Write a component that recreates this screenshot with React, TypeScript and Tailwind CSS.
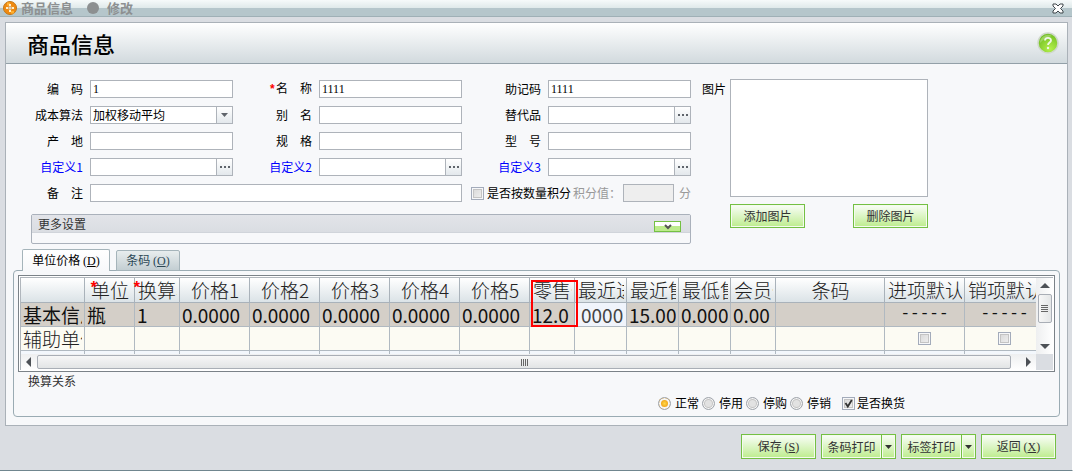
import React, { useState } from 'react';

const MONO = "font-['Liberation_Mono','Noto_Sans_CJK_SC',monospace]";

const greenButton =
  'border border-[#74c043] bg-linear-to-b from-[#fafdf8] to-[#bdec8c] text-[#333] shadow-[inset_0_0_0_1px_#f4fbee]';

const boxInput =
  "h-[18px] min-w-0 flex-1 border border-[#aeb3ba] bg-white px-[2px] font-['Liberation_Serif','Noto_Sans_CJK_SC',serif] text-xs leading-4 text-black outline-none";

const checkBox =
  "relative h-[13px] w-[13px] shrink-0 appearance-none border border-[#a3abba] bg-linear-to-br from-[#d6d6d6] to-[#f2f2f2] shadow-[inset_0_0_0_1px_#f6f7f9,inset_0_0_0_2px_#c4c4c4]";

interface FieldProps {
  id: string;
  label: string;
  value?: string;
  required?: boolean;
  blue?: boolean;
  picker?: boolean;
}

const Field: React.FC<FieldProps> = ({ id, label, value = '', required, blue, picker }) => (
  <div className="flex min-w-0 items-center gap-[7px]">
    <label htmlFor={id} className={`w-[52px] shrink-0 text-right whitespace-nowrap ${blue ? 'text-[#0000ff]' : ''}`}>
      {required && <span className={`font-bold text-[#ff0000] ${MONO}`}>*</span>}
      {label}
    </label>
    <div className="flex min-w-0 flex-1">
      <input id={id} type="text" defaultValue={value} className={boxInput} />
      {picker && (
        <button
          type="button"
          aria-label={`选择${label}`}
          className="flex h-[18px] w-4 items-center justify-center gap-[2px] border border-l-0 border-[#aeb3ba] bg-linear-to-b from-white to-[#e3e8ec]"
        >
          <span className="h-[2px] w-[2px] bg-[#5f646b]" />
          <span className="h-[2px] w-[2px] bg-[#5f646b]" />
          <span className="h-[2px] w-[2px] bg-[#5f646b]" />
        </button>
      )}
    </div>
  </div>
);

const Mnemonic: React.FC<{ letter: string }> = ({ letter }) => (
  <span className="font-['Liberation_Serif',serif]">
    (<u>{letter}</u>)
  </span>
);

const Triangle: React.FC<{ dir: 'up' | 'down' | 'left' | 'right' }> = ({ dir }) => {
  const points = {
    up: '0,7 5,2 10,7',
    down: '0,3 10,3 5,8',
    left: '7,0 2,5 7,10',
    right: '3,0 8,5 3,10',
  };
  return (
    <svg width="10" height="10" viewBox="0 0 10 10">
      <polygon points={points[dir]} fill="#4d5156" />
    </svg>
  );
};

const SplitButton: React.FC<{ label: string }> = ({ label }) => (
  <div className="flex">
    <button type="button" className={`h-[25px] w-[61px] whitespace-nowrap ${greenButton}`}>{label}</button>
    <button
      type="button"
      aria-label={`${label}选项`}
      className={`flex h-[25px] w-[14px] items-center justify-center border-l-0 ${greenButton}`}
    >
      <svg width="7" height="4" viewBox="0 0 7 4"><polygon points="0,0 7,0 3.5,4" fill="#333" /></svg>
    </button>
  </div>
);

const columns = [
  { title: '', width: 64 },
  { title: '单位', width: 50, center: true, required: true },
  { title: '换算率', width: 45, required: true },
  { title: '价格1', width: 70, center: true },
  { title: '价格2', width: 70, center: true },
  { title: '价格3', width: 70, center: true },
  { title: '价格4', width: 70, center: true },
  { title: '价格5', width: 70, center: true },
  { title: '零售价', width: 45, marked: true },
  { title: '最近进价', width: 52 },
  { title: '最近售价', width: 52 },
  { title: '最低售价', width: 52 },
  { title: '会员价', width: 45 },
  { title: '条码', width: 109, center: true },
  { title: '进项默认', width: 80 },
  { title: '销项默认', width: 80 },
];

const baseRow = [
  '基本信息', '瓶', '1', '0.0000', '0.0000', '0.0000', '0.0000', '0.0000',
  '12.0', '0000', '15.00', '0.0000', '0.00', '', '-----', '-----',
];

const PriceTable: React.FC = () => (
  <table className="w-[1024px] table-fixed border-separate border-spacing-0 text-[19px] leading-6">
    <colgroup>
      {columns.map((c, i) => <col key={i} style={{ width: c.width }} />)}
    </colgroup>
    <thead>
      <tr>
        {columns.map((c, i) => (
          <th
            key={i}
            className="relative h-[25px] border-r border-b border-[#a9b2ba] bg-linear-to-b from-white to-[#dbe3e7] p-0 font-light text-[#222]"
          >
            {c.required && (
              <span className={`absolute -top-px z-10 text-base font-bold text-[#ff0000] ${c.center ? 'left-1' : '-left-[3px]'} ${MONO}`}>*</span>
            )}
            <div className={`mr-[2px] ml-[3px] h-6 overflow-hidden whitespace-nowrap ${c.center ? 'text-center' : 'text-left'}`}>{c.title}</div>
            {c.marked && (
              <div className="pointer-events-none absolute top-[2px] left-[1px] z-20 h-[47px] w-[47px] border-2 border-[#ff0000]" />
            )}
          </th>
        ))}
      </tr>
    </thead>
    <tbody>
      <tr className="bg-[#d4cfc8] text-[#111]">
        {baseRow.map((v, i) => (
          <td key={i} className={`h-6 border-r border-b border-[#b0b9c1] p-0 ${i === 9 ? 'bg-[#f0f4fb] text-[#444]' : ''}`}>
            {i > 13 ? (
              <div className={`h-[23px] text-center ${MONO} text-base leading-[23px]`}>{v}</div>
            ) : (
              <div className={`mr-[2px] ml-[2px] h-[23px] overflow-hidden leading-[23px] whitespace-nowrap ${i === 9 ? 'pl-1' : ''}`}>{v}</div>
            )}
          </td>
        ))}
      </tr>
      {['辅助单位1', '辅助单位2'].map((name, row) => (
        <tr key={name} className={row === 0 ? 'bg-[#fcfbf3] font-light text-[#222]' : 'bg-[#f3f7fc] font-light text-[#222]'}>
          {columns.map((c, i) => (
            <td key={i} className="h-6 border-r border-b border-[#b0b9c1] p-0">
              {i === 0 && (
                <div className="mr-[2px] ml-[2px] h-[23px] overflow-hidden leading-[23px] whitespace-nowrap">{name}</div>
              )}
              {i > 13 && (
                <div className="flex h-[23px] items-center justify-center">
                  <input type="checkbox" aria-label={`${name}${c.title}`} className={checkBox} />
                </div>
              )}
            </td>
          ))}
        </tr>
      ))}
    </tbody>
  </table>
);

const ScrollGrid: React.FC = () => (
  <div className="border border-[#7b8288] bg-white p-px">
    <div className="border border-r-0 border-b-0 border-[#b0b6bc]">
      <div className="flex h-[76px]">
        <div className="min-w-0 flex-1 overflow-hidden">
          <PriceTable />
        </div>
        <div className="flex w-[17px] flex-col items-center bg-linear-to-r from-[#eeeff0] to-white">
          <button type="button" aria-label="向上滚动" className="flex h-4 w-4 items-center justify-center"><Triangle dir="up" /></button>
          <div className="flex h-[29px] w-[14px] flex-col items-center justify-center gap-px rounded-xs border border-[#a9aeb6] bg-linear-to-r from-[#f7f7f7] to-[#e4e6e7]">
            <span className="h-px w-[7px] bg-[#666]" />
            <span className="h-px w-[7px] bg-[#666]" />
            <span className="h-px w-[7px] bg-[#666]" />
            <span className="h-px w-[7px] bg-[#666]" />
          </div>
          <button type="button" aria-label="向下滚动" className="mt-auto flex h-4 w-4 items-center justify-center"><Triangle dir="down" /></button>
        </div>
      </div>
      <div className="flex h-4">
        <div className="flex flex-1 items-center bg-linear-to-b from-[#eeeff0] to-white">
          <button type="button" aria-label="向左滚动" className="flex h-4 w-4 items-center justify-center"><Triangle dir="left" /></button>
          <div className="mr-[9px] flex h-[14px] flex-1 items-center justify-center gap-px rounded-xs border border-[#a9aeb6] bg-linear-to-b from-[#f7f7f7] to-[#e2e4e5]">
            <span className="h-[7px] w-px bg-[#666]" />
            <span className="h-[7px] w-px bg-[#666]" />
            <span className="h-[7px] w-px bg-[#666]" />
            <span className="h-[7px] w-px bg-[#666]" />
          </div>
          <button type="button" aria-label="向右滚动" className="flex h-4 w-4 items-center justify-center"><Triangle dir="right" /></button>
        </div>
        <div className="w-[17px] bg-[#dadde2]" />
      </div>
    </div>
  </div>
);

const TitleBar: React.FC = () => (
  <div className="flex h-[17px] items-center border-b border-[#9fb0b6] bg-[linear-gradient(to_bottom,#f6fafa_0px,#dfe9ea_8px,#b5c6cb_8px,#b5c6cb_16px)] pr-2 pl-[3px] text-[13px] leading-4 font-bold text-[#8d9091]">
    <svg width="14" height="14" viewBox="0 0 14 14">
      <circle cx="7" cy="7" r="6.5" fill="#f08a10" stroke="#c07818" />
      <path d="M4 1.500h3v3H4zM8 10h3v2.500H8z" fill="#ffb030" />
      <path d="M6 3h2v2H6zM6 9h2v2H6zM3 6h2v2H3zM9 6h2v2H9z" fill="#fff0c8" />
      <path d="M5.500 5.500h3v3h-3z" fill="#d9d2c0" />
    </svg>
    <span className="ml-1">商品信息</span>
    <span className="mr-2 ml-[14px] h-3 w-3 rounded-full bg-[#8d9091]" />
    <span>修改</span>
    <button type="button" aria-label="关闭" className="ml-auto">
      <svg width="12" height="11" viewBox="0 0 12 11">
        <path d="M1 1h3l2 2 2-2h3v2L8.500 5.500 11 8v2H8L6 8l-2 2H1V8l2.500-2.500L1 3z" fill="#fff" stroke="#3f464b" />
      </svg>
    </button>
  </div>
);

const states = ['正常', '停用', '停购', '停销'];

export default function App() {
  const [state, setState] = useState('正常');
  const [swap, setSwap] = useState(true);

  return (
    <div className="flex min-h-screen flex-col border-r border-b border-r-white border-b-[#70868f] bg-[#dadde2] font-['Noto_Sans_CJK_SC',sans-serif] text-xs leading-4 text-black">
      <TitleBar />

      <main className="mt-[5px] mr-1 ml-[5px] border border-[#aab1b8] bg-[#f7f8fa]">
        <header className="flex h-[41px] items-center justify-between border-b border-[#93a0a8] bg-linear-to-b from-white to-[#d2dade] pr-2 pl-[21px]">
          <h1 className="text-[22px] leading-8 font-medium">商品信息</h1>
          <button type="button" aria-label="帮助">
            <svg width="22" height="22" viewBox="0 0 22 22">
              <defs>
                <radialGradient id="help" cx="0.6" cy="0.8" r="0.8">
                  <stop offset="0" stopColor="#b4f04c" />
                  <stop offset="1" stopColor="#6dbb20" />
                </radialGradient>
              </defs>
              <circle cx="11" cy="11" r="10" fill="url(#help)" stroke="#cfd8cb" strokeWidth="1.500" />
              <path d="M3 11a8 8 0 0 1 12-7C9 5 6 8 3 11z" fill="#fff" opacity="0.250" />
              <path d="M8 8.500C8 5 14 5 14 8.500c0 2-3 2.200-3 4.500" fill="none" stroke="#f0f6ea" strokeWidth="1.800" />
              <circle cx="11" cy="16" r="1.200" fill="#f0f6ea" />
            </svg>
          </button>
        </header>

        <div className="flex items-start pr-[6px] pl-[25px]">
          <div className="mt-4 max-w-[660px] flex-1">
            <div className="grid grid-cols-3 gap-x-[27px] gap-y-2">
              <Field id="code" label="编　码" value="1" />
              <Field id="name" label="名　称" value="1111" required />
              <Field id="mnemonic" label="助记码" value="1111" />
              <div className="flex min-w-0 items-center gap-[7px]">
                <label htmlFor="cost" className="w-[52px] shrink-0 text-right whitespace-nowrap">成本算法</label>
                <div className="relative flex min-w-0 flex-1">
                  <select id="cost" className="h-[18px] w-full appearance-none border border-[#aeb3ba] bg-white pl-[2px] text-xs leading-4 outline-none">
                    <option>加权移动平均</option>
                  </select>
                  <span className="pointer-events-none absolute inset-y-px right-px flex w-4 items-center justify-center border-l border-[#aeb3ba] bg-linear-to-b from-white to-[#e3e8ec]">
                    <svg width="7" height="4" viewBox="0 0 7 4"><polygon points="0,0 7,0 3.5,4" fill="#5f646b" /></svg>
                  </span>
                </div>
              </div>
              <Field id="alias" label="别　名" />
              <Field id="substitute" label="替代品" picker />
              <Field id="origin" label="产　地" />
              <Field id="spec" label="规　格" />
              <Field id="model" label="型　号" />
              <Field id="custom1" label="自定义1" blue picker />
              <Field id="custom2" label="自定义2" blue picker />
              <Field id="custom3" label="自定义3" blue picker />
            </div>

            <div className="mt-2 flex items-center">
              <div className="flex min-w-0 flex-1 items-center gap-[7px]">
                <label htmlFor="remark" className="w-[52px] shrink-0 text-right">备　注</label>
                <input id="remark" type="text" className={boxInput} />
              </div>
              <label className="ml-[9px] flex items-center gap-[3px] whitespace-nowrap">
                <input type="checkbox" className={checkBox} />
                是否按数量积分
              </label>
              <label htmlFor="points" className="ml-[2px] w-[50px] whitespace-nowrap text-[#999]">积分值：</label>
              <input id="points" type="text" disabled className="h-[18px] w-[51px] border border-[#aeb3ba] bg-[#eeeeee]" />
              <span className="ml-[5px] text-[#999]">分</span>
            </div>

            <section className="mt-3 rounded-xs border border-[#aab1bb]">
              <div className="flex h-[18px] items-center justify-between border-b border-[#d0d4da] bg-linear-to-b from-[#e2e4e9] to-[#dadde2] pr-[9px] pl-[6px] text-[#333]">
                <h2>更多设置</h2>
                <button
                  type="button"
                  aria-label="展开更多设置"
                  className="mt-[6px] flex h-[11px] w-[27px] items-center justify-center border border-[#74c043] bg-linear-to-b from-white from-50% to-[#bdec8c] to-50%"
                >
                  <svg width="8" height="6" viewBox="0 0 8 6">
                    <path d="M1 1l3 3 3-3" fill="none" stroke="#555" strokeWidth="2" />
                  </svg>
                </button>
              </div>
              <div className="h-[10px]" />
            </section>
          </div>

          <div className="mt-[15px] ml-[11px] flex">
            <span className="mt-[2px] w-7">图片</span>
            <div>
              <div className="h-[118px] w-[198px] border border-[#aeb3ba] bg-white" />
              <div className="mt-[7px] flex justify-between">
                <button type="button" className={`h-6 w-[75px] ${greenButton}`}>添加图片</button>
                <button type="button" className={`h-6 w-[75px] ${greenButton}`}>删除图片</button>
              </div>
            </div>
          </div>
        </div>

        <div className="mt-[5px] mr-[7px] mb-2 ml-[7px]">
          <div className="relative z-10 -mb-px flex items-end gap-[6px] pl-[9px]" role="tablist">
            <button type="button" role="tab" aria-selected="true" className="h-[22px] w-[88px] rounded-t-xs border border-b-0 border-[#a5b4ba] bg-linear-to-b from-white to-[#f7f8fa]">
              单位价格 <Mnemonic letter="D" />
            </button>
            <button type="button" role="tab" aria-selected="false" className="h-[21px] w-16 rounded-t-xs border border-[#a5b4ba] bg-linear-to-b from-[#e8edee] to-[#c3ced2] text-[#2b4755]">
              条码 <Mnemonic letter="O" />
            </button>
          </div>
          <div className="rounded-sm border border-[#9aabb3] bg-[#f7f8fa] px-1 pt-1 pb-[5px]">
            <ScrollGrid />
            <p className="mt-px ml-[10px] text-[#333]">换算关系</p>
            <div className="mt-[6px] flex items-center justify-end gap-[3px] pr-[150px]">
              {states.map(s => (
                <label key={s} className="flex items-center gap-1">
                  <input
                    type="radio"
                    name="state"
                    checked={state === s}
                    onChange={() => setState(s)}
                    className="h-[13px] w-[13px] appearance-none rounded-full border border-[#a0a5ac] bg-[#e2e2e2] shadow-[inset_0_0_0_1px_#f6f6f6,inset_0_0_0_2px_#c4c4c4] checked:bg-[radial-gradient(circle,#ffd84a_0px,#f0a010_4px)] checked:shadow-[inset_0_0_0_2px_#f6f6f6]"
                  />
                  {s}
                </label>
              ))}
              <label className="ml-2 flex items-center gap-[2px]">
                <span className="relative flex">
                  <input type="checkbox" checked={swap} onChange={e => setSwap(e.target.checked)} className={checkBox} />
                  {swap && (
                    <svg className="pointer-events-none absolute inset-0" width="13" height="13" viewBox="0 0 13 13">
                      <path d="M3.500 6l2.300 3.500L9.800 3" fill="none" stroke="#333" strokeWidth="1.800" />
                    </svg>
                  )}
                </span>
                是否换货
              </label>
            </div>
          </div>
        </div>
      </main>

      <footer className="flex justify-end gap-[5px] pt-2 pr-4 pb-[11px]">
        <button type="button" className={`h-[25px] w-[75px] ${greenButton}`}>保存 <Mnemonic letter="S" /></button>
        <SplitButton label="条码打印" />
        <SplitButton label="标签打印" />
        <button type="button" className={`h-[25px] w-[75px] ${greenButton}`}>返回 <Mnemonic letter="X" /></button>
      </footer>
    </div>
  );
}
